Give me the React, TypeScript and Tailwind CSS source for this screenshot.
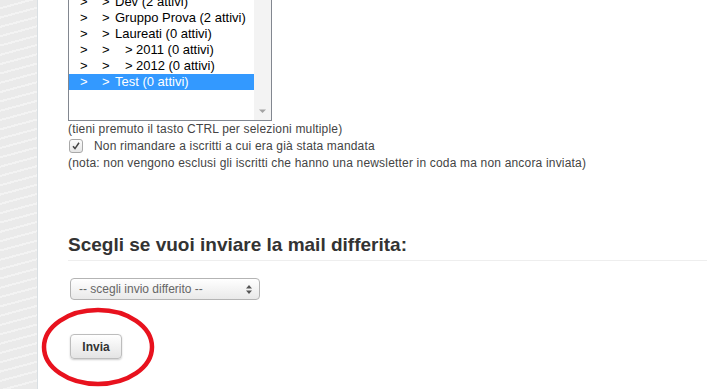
import React from "react";

const rows: { depth: number; label: string; selected?: boolean }[] = [
  { depth: 0, label: "Dev (2 attivi)" },
  { depth: 0, label: "Gruppo Prova (2 attivi)" },
  { depth: 0, label: "Laureati (0 attivi)" },
  { depth: 1, label: "2011 (0 attivi)" },
  { depth: 1, label: "2012 (0 attivi)" },
  { depth: 0, label: "Test (0 attivi)", selected: true },
];

export default function App() {
  return (
    <div className="relative flex h-[389px] w-[707px] overflow-hidden bg-white font-[Liberation_Sans,Arial,sans-serif]">
      {/* striped side rail */}
      <div className="w-[38px] shrink-0 border-r border-[#d9dfe3] bg-[#ececec] bg-[repeating-linear-gradient(165deg,#eaeaea_0px,#eaeaea_7px,#f3f3f3_7px,#f3f3f3_9px)]" />

      <div className="-mt-[8px] flex-1 pl-[30px] text-[12px] tracking-[0.18px] text-[#444]">
        {/* groups listbox */}
        <div className="flex h-[129px] w-[204px] border border-[#828790] bg-white text-[13px] leading-[16px] tracking-normal text-black">
          <div className="flex-1">
            <div className="h-px" />
            {rows.map((r) => (
              <div
                key={r.label}
                className={`flex h-[16px] items-center whitespace-nowrap pl-[11px] ${
                  r.selected ? "bg-[#3399ff] text-white" : ""
                }`}
              >
                <span className="w-[22px]">&gt;</span>
                <span className={r.depth ? "w-[23px]" : "w-[13px]"}>&gt;</span>
                {r.depth > 0 && <span className="w-[11px]">&gt;</span>}
                <span>{r.label}</span>
              </div>
            ))}
          </div>
          <div className="flex w-[17px] flex-col justify-end bg-[#f3f3f3] pb-[6px]">
            <svg width="17" height="6" viewBox="0 0 17 6">
              <path d="M5 1.5h7l-3.5 3.5z" fill="#a3a3a3" />
            </svg>
          </div>
        </div>

        <p className="leading-[16px]">(tieni premuto il tasto CTRL per selezioni multiple)</p>
        <label className="flex h-[18px] items-center">
          <span className="ml-[1px] flex h-[14px] w-[14px] items-center justify-center rounded-[3px] border border-[#a9a9a9] bg-[linear-gradient(#fcfcfc,#e6e6e6)]">
            <svg width="10" height="10" viewBox="0 0 10 10">
              <path d="M2 5.2l2 2.4L8 1.8" fill="none" stroke="#444" strokeWidth="1.5" />
            </svg>
          </span>
          <span className="ml-[11px]">Non rimandare a iscritti a cui era già stata mandata</span>
        </label>
        <p className="leading-[16px]">(nota: non vengono esclusi gli iscritti che hanno una newsletter in coda ma non ancora inviata)</p>

        <h2 className="mt-[62px] h-[28px] border-b border-[#eeeeee] text-[19px] font-bold leading-[24px] tracking-normal text-[#333]">
          Scegli se vuoi inviare la mail differita:
        </h2>

        <div className="ml-[2px] mt-[17px] flex h-[22px] w-[190px] items-center justify-between rounded-[4px] border border-[#b4b4b4] bg-[linear-gradient(#ffffff,#e9e9e9)] pl-[8px] pr-[6px] tracking-normal text-[#666]">
          <span>-- scegli invio differito --</span>
          <svg width="8" height="11" viewBox="0 0 8 11">
            <path d="M1 4.5h6L4 1z M1 6.5h6L4 10z" fill="#555" />
          </svg>
        </div>

        <button className="ml-[2px] mt-[34px] flex h-[25px] w-[52px] items-center justify-center rounded-[4px] border border-[#bdbdbd] bg-[linear-gradient(#ffffff,#e4e4e4)] text-[12px] font-bold tracking-normal text-[#333] shadow-[0_1px_2px_rgba(0,0,0,0.2)]">
          Invia
        </button>
      </div>

      {/* hand-drawn red circle annotation */}
      <svg className="absolute left-[40px] top-[304px]" width="120" height="84" viewBox="0 0 120 84">
        <ellipse cx="58" cy="43" rx="54" ry="37" fill="none" stroke="#e8121e" strokeWidth="4.5" />
      </svg>
    </div>
  );
}
